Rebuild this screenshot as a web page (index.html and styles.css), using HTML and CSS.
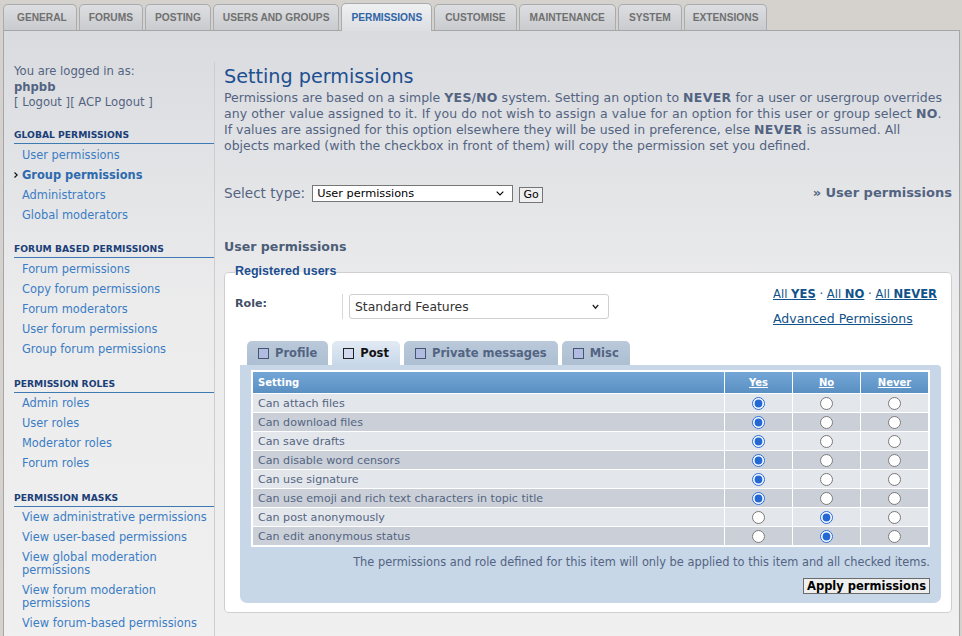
FILE: index.html
```html
<!DOCTYPE html>
<html lang="en">
<head>
<meta charset="utf-8">
<title>Setting permissions</title>
<link rel="stylesheet" href="styles.css">
</head>
<body>
<div class="tabs">
  <a class="tab first">GENERAL</a>
  <a class="tab">FORUMS</a>
  <a class="tab">POSTING</a>
  <a class="tab">USERS AND GROUPS</a>
  <a class="tab active">PERMISSIONS</a>
  <a class="tab">CUSTOMISE</a>
  <a class="tab">MAINTENANCE</a>
  <a class="tab">SYSTEM</a>
  <a class="tab last">EXTENSIONS</a>
</div>
<div class="panel">
  <div class="sidebar">
    <div class="login">You are logged in as:<br><strong>phpbb</strong><br>[ <a>Logout</a> ][ <a>ACP Logout</a> ]</div>

    <div class="menu-head first-head">Global permissions</div>
    <ul class="menu">
      <li><a>User permissions</a></li>
      <li class="active"><a><svg class="arrow" width="4" height="6" viewBox="0 0 4 6"><path d="M0.5 0.5 L3.2 3 L0.5 5.5" fill="none" stroke="#111" stroke-width="1.2"/></svg>Group permissions</a></li>
      <li><a>Administrators</a></li>
      <li><a>Global moderators</a></li>
    </ul>

    <div class="menu-head">Forum based permissions</div>
    <ul class="menu">
      <li><a>Forum permissions</a></li>
      <li><a>Copy forum permissions</a></li>
      <li><a>Forum moderators</a></li>
      <li><a>User forum permissions</a></li>
      <li><a>Group forum permissions</a></li>
    </ul>

    <div class="menu-head">Permission roles</div>
    <ul class="menu">
      <li><a>Admin roles</a></li>
      <li><a>User roles</a></li>
      <li><a>Moderator roles</a></li>
      <li><a>Forum roles</a></li>
    </ul>

    <div class="menu-head">Permission masks</div>
    <ul class="menu">
      <li><a>View administrative permissions</a></li>
      <li><a>View user-based permissions</a></li>
      <li><a>View global moderation permissions</a></li>
      <li><a>View forum moderation permissions</a></li>
      <li><a>View forum-based permissions</a></li>
    </ul>
  </div>

  <div class="main">
    <h1>Setting permissions</h1>
    <p class="intro">Permissions are based on a simple <b>YES</b>/<b>NO</b> system. Setting an option to <b>NEVER</b> for a user or usergroup overrides<br><span class="l2">any other value assigned to it. If you do not wish to assign a value for an option for this user or group select <b>NO</b>.</span><br>If values are assigned for this option elsewhere they will be used in preference, else <b>NEVER</b> is assumed. All<br>objects marked (with the checkbox in front of them) will copy the permission set you defined.</p>

    <div class="type-row">
      <span class="type-label">Select type:</span>
      <div class="type-select"><span>User permissions</span><svg width="8" height="5" viewBox="0 0 8 5"><path d="M0.7 0.7 L4 4 L7.3 0.7" fill="none" stroke="#000" stroke-width="1.1"/></svg></div>
      <span class="go-btn">Go</span>
      <span class="crumb">» User permissions</span>
    </div>

    <h2>User permissions</h2>

    <fieldset class="perm-fs">
      <legend>Registered users</legend>
      <div class="role-row">
        <div class="role">
          <div class="role-label">Role:</div>
          <div class="role-select"><span>Standard Features</span><svg width="7" height="6" viewBox="0 0 7 6"><path d="M0.8 1 L3.5 4.2 L6.2 1" fill="none" stroke="#222" stroke-width="1.3"/></svg></div>
        </div>
        <div class="quick">
          <p class="all"><a>All <b>YES</b></a> · <a>All <b>NO</b></a> · <a>All <b>NEVER</b></a></p>
          <p class="adv"><a>Advanced Permissions</a></p>
        </div>
      </div>

      <div class="subtabs">
        <a class="subtab"><span class="box"></span>Profile</a>
        <a class="subtab active"><span class="box"></span>Post</a>
        <a class="subtab"><span class="box"></span>Private messages</a>
        <a class="subtab"><span class="box"></span>Misc</a>
      </div>
      <div class="perm-panel">
        <table class="perm-table">
          <thead>
            <tr><th>Setting</th><th class="c"><a>Yes</a></th><th class="c"><a>No</a></th><th class="c"><a>Never</a></th></tr>
          </thead>
          <tbody>
            <tr class="r1"><td>Can attach files</td><td class="c"><input type="radio" name="p1" checked></td><td class="c"><input type="radio" name="p1"></td><td class="c"><input type="radio" name="p1"></td></tr>
            <tr class="r2"><td>Can download files</td><td class="c"><input type="radio" name="p2" checked></td><td class="c"><input type="radio" name="p2"></td><td class="c"><input type="radio" name="p2"></td></tr>
            <tr class="r1"><td>Can save drafts</td><td class="c"><input type="radio" name="p3" checked></td><td class="c"><input type="radio" name="p3"></td><td class="c"><input type="radio" name="p3"></td></tr>
            <tr class="r2"><td>Can disable word censors</td><td class="c"><input type="radio" name="p4" checked></td><td class="c"><input type="radio" name="p4"></td><td class="c"><input type="radio" name="p4"></td></tr>
            <tr class="r1"><td>Can use signature</td><td class="c"><input type="radio" name="p5" checked></td><td class="c"><input type="radio" name="p5"></td><td class="c"><input type="radio" name="p5"></td></tr>
            <tr class="r2"><td>Can use emoji and rich text characters in topic title</td><td class="c"><input type="radio" name="p6" checked></td><td class="c"><input type="radio" name="p6"></td><td class="c"><input type="radio" name="p6"></td></tr>
            <tr class="r1"><td>Can post anonymously</td><td class="c"><input type="radio" name="p7"></td><td class="c"><input type="radio" name="p7" checked></td><td class="c"><input type="radio" name="p7"></td></tr>
            <tr class="r2"><td>Can edit anonymous status</td><td class="c"><input type="radio" name="p8"></td><td class="c"><input type="radio" name="p8" checked></td><td class="c"><input type="radio" name="p8"></td></tr>
          </tbody>
        </table>
        <p class="note">The permissions and role defined for this item will only be applied to this item and all checked items.</p>
        <div class="actions"><span class="apply-btn">Apply permissions</span></div>
      </div>
    </fieldset>
  </div>
</div>
</body>
</html>
```
FILE: styles.css
```css
html { overflow: hidden; }
body {
  margin: 0;
  background: #d5d2cd;
  font-family: "DejaVu Sans", Verdana, sans-serif;
  color: #536482;
}
a { text-decoration: none; color: inherit; cursor: pointer; }

/* top tabs */
.tabs {
  display: flex;
  align-items: flex-end;
  gap: 2px;
  height: 30px;
  padding-left: 3px;
}
.tab {
  font-family: "Liberation Sans", Arial, sans-serif;
  font-weight: bold;
  font-size: 10.2px;
  color: #707070;
  height: 25px;
  line-height: 26px;
  padding: 0 9px;
  border: 1px solid #a9abae;
  border-bottom: 0;
  border-radius: 5px 5px 0 0;
  background: linear-gradient(#dcdee1, #c9cbce);
}
.tab.first { padding-left: 13px; }
.tab.active ~ .tab { padding: 0 10px; }
.tab.active ~ .tab.last { padding: 0 8px; }
.tab.active {
  height: 27px;
  line-height: 28px;
  padding: 0 9px;
  margin-bottom: -1px;
  position: relative;
  z-index: 1;
  background: linear-gradient(#eef0f2, #dcdee1);
  color: #2f64a6;
}

/* panel */
.panel {
  margin: 0 2px 0 3px;
  border: 1px solid #a4a6a9;
  border-bottom: 0;
  background: linear-gradient(#d9dbdf 0, #ececed 280px, #f0f0f0 100%);
  display: flex;
  align-items: stretch;
  min-height: 640px;
}

/* sidebar */
.sidebar {
  margin-top: 31px;
  width: 200px;
  padding: 2px 0 0 10px;
  border-right: 1px solid #cdcdcd;
  font-size: 11.4px;
  flex-shrink: 0;
}
.login { line-height: 15.5px; font-size: 11.6px; }
.login strong { font-weight: bold; }
.menu-head {
  margin-top: 17.3px;
  font-size: 9.2px;
  font-weight: bold;
  text-transform: uppercase;
  color: #1b3f78;
  line-height: 13px;
  padding-bottom: 2px;
  border-bottom: 1px solid #3d7ab3;
  margin-bottom: 1px;
}
.menu-head.first-head { margin-top: 17.5px; }
.menu { list-style: none; margin: 0; padding: 0; }
.menu a {
  display: block;
  padding: 3.5px 0 3.5px 8px;
  line-height: 13px;
  color: #3b7dc4;
}
.menu .active a { font-weight: bold; color: #2d6aae; padding-left: 0; }
.arrow { margin-right: 4px; vertical-align: 1px; }

/* main */
.main {
  flex: 1;
  min-width: 0;
  padding: 34px 7px 0 9px;
}
h1 {
  margin: 0 0 2px;
  font-size: 19.2px;
  line-height: 23px;
  font-weight: normal;
  color: #1d4f91;
}
.intro { margin: 0; font-size: 12.5px; line-height: 16px; white-space: nowrap; }
.intro b { letter-spacing: 0.3px; }
.intro .l2 { letter-spacing: 0.09px; }

.type-row {
  display: flex;
  align-items: flex-start;
  margin-top: 31px;
  height: 17px;
}
.type-label { font-size: 13.6px; line-height: 17px; margin-right: 7px; }
.type-select {
  box-sizing: border-box;
  width: 201px;
  height: 17px;
  border: 1px solid #767676;
  background: #fff;
  color: #000;
  font-size: 11.3px;
  line-height: 15px;
  padding: 0 8px 0 4px;
  display: flex;
  align-items: center;
  justify-content: space-between;
}
.go-btn {
  box-sizing: border-box;
  margin: 2px 0 0 6px;
  width: 24px;
  height: 16px;
  border: 1px solid #767676;
  background: #efefef;
  color: #000;
  font-size: 11px;
  line-height: 14px;
  text-align: center;
}
.crumb { margin-left: auto; font-weight: bold; font-size: 13px; line-height: 16px; color: #536482; }

h2 {
  margin: 36.7px 0 0;
  font-size: 12.6px;
  line-height: 16px;
  font-weight: bold;
  color: #4c5d77;
}

.perm-fs {
  margin: 9.8px 0 0;
  border: 1px solid #cfcfcf;
  border-radius: 4px;
  background: #fff;
  padding: 0 10px 9px 10px;
}
.perm-fs legend {
  padding: 0 0 2px;
  font-family: "Liberation Sans", Arial, sans-serif;
  font-weight: bold;
  font-size: 12.5px;
  line-height: 15px;
  color: #1d4f91;
}
.role-row {
  display: flex;
  justify-content: space-between;
  align-items: flex-start;
  margin-top: 5px;
}
.role { display: flex; align-items: flex-start; margin-top: 8px; }
.role-label {
  width: 107px;
  height: 23px;
  padding-top: 2px;
  line-height: 16px;
  border-right: 1px solid #d8d8d8;
  font-weight: bold;
  font-size: 11.1px;
  color: #425067;
}
.role-select {
  box-sizing: border-box;
  margin-left: 6px;
  width: 260px;
  height: 25px;
  border: 1px solid #cfcfcf;
  border-radius: 3px;
  background: #fff;
  color: #333;
  font-size: 12.4px;
  padding: 0 9px 0 5px;
  display: flex;
  align-items: center;
  justify-content: space-between;
}
.quick { width: 168px; color: #105289; }
.quick p { margin: 0; line-height: 16px; white-space: nowrap; }
.quick .all { font-size: 11.6px; }
.quick a { text-decoration: underline; color: #105289; }
.quick .adv { margin-top: 8.7px; font-size: 12.5px; }

.subtabs {
  display: flex;
  gap: 4px;
  margin: 14px 0 0 12px;
}
.subtab {
  display: flex;
  align-items: center;
  height: 24px;
  padding: 0 11px;
  border-radius: 5px 5px 0 0;
  background: linear-gradient(#b9c9da, #adbfd2);
  font-weight: bold;
  font-size: 11.5px;
  color: #536482;
}
.subtab.active { background: linear-gradient(#e2eaf4, #c8d8e9); color: #111; }
.box {
  width: 9px;
  height: 9px;
  border: 1px solid #47566f;
  background: #b2bbe2;
  margin-right: 6px;
}
.subtab.active .box { background: #d3daf0; border-color: #222; }

.perm-panel {
  margin-left: 5px;
  background: #c7d7e8;
  border-radius: 0 4px 7px 7px;
  padding: 5px 11px 9px;
}
.perm-table {
  width: 100%;
  border-collapse: separate;
  border-spacing: 1px;
  background: #fff;
  padding: 1px;
  font-size: 11.1px;
}
.perm-table th {
  height: 21px;
  padding: 0 5px;
  background: linear-gradient(#74a7d7, #5a8fc2);
  color: #fff;
  font-weight: bold;
  font-size: 10px;
  text-align: left;
}
.perm-table th.c { width: 57px; text-align: center; }
.perm-table th a { text-decoration: underline; }
.perm-table td { height: 18px; padding: 0 5px; }
.perm-table td.c { text-align: center; }
.perm-table tr.r1 td { background: #e3e6ea; }
.perm-table tr.r2 td { background: #cbd0d8; }
.perm-table input { margin: 0; width: 13px; height: 13px; vertical-align: middle; accent-color: #2468d6; }

.note { margin: 8px 0 0; text-align: right; font-size: 11.4px; line-height: 14px; }
.actions { display: flex; justify-content: flex-end; margin-top: 9px; }
.apply-btn {
  box-sizing: border-box;
  height: 16px;
  padding: 0 3px;
  border: 1px solid #6b6b6b;
  background: #efefef;
  color: #000;
  font-weight: bold;
  font-size: 11.5px;
  line-height: 14px;
}
```
